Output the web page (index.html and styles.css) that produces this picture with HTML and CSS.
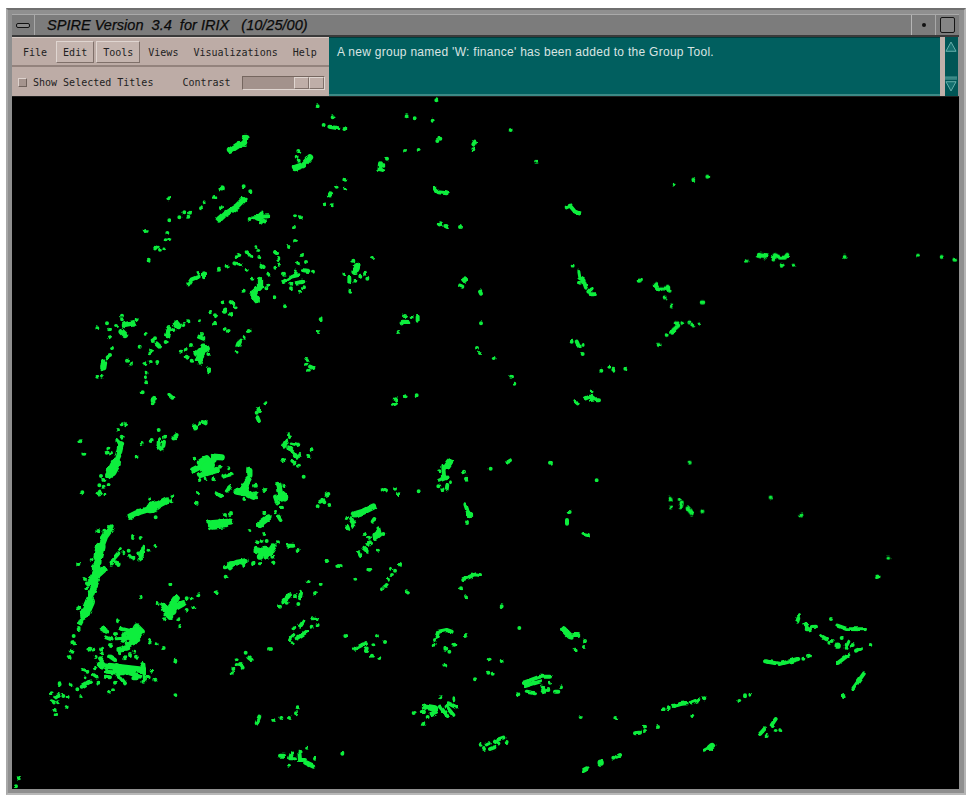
FILE: index.html
```html
<!DOCTYPE html>
<html lang="en">
<head>
<meta charset="utf-8">
<title>SPIRE Version 3.4 for IRIX</title>
<link rel="stylesheet" href="styles.css">
</head>
<body>
<div class="window">
  <div class="titlebar">
    <div class="tb-menu"><span class="tb-menu-bar"></span></div>
    <div class="tb-title">SPIRE Version  3.4  for IRIX   (10/25/00)</div>
    <div class="tb-min"><span class="tb-min-dot"></span></div>
    <div class="tb-max"><span class="tb-max-box"></span></div>
  </div>
  <div class="panel">
    <div class="controls">
      <div class="menubar">
        <span class="menu-item spaced">File</span>
        <span class="menu-item raised spaced">Edit</span>
        <span class="menu-item raised">Tools</span>
        <span class="menu-item">Views</span>
        <span class="menu-item">Visualizations</span>
        <span class="menu-item">Help</span>
      </div>
      <div class="optionbar">
        <span class="checkbox"></span>
        <span class="opt-label">Show Selected Titles</span>
        <span class="contrast-label">Contrast</span>
        <div class="slider"><span class="thumb"></span><span class="thumb"></span></div>
      </div>
    </div>
    <div class="message">A new group named 'W: finance' has been added to the Group Tool.</div>
    <div class="scroll">
      <svg class="scroll-svg" width="13" height="59" viewBox="0 0 13 59">
        <path class="arrow" d="M6.5 3 L12 13 H1 Z"/>
        <path class="arrow-line" d="M0 41 H13 M0 43 H13"/>
        <path class="arrow" d="M1 46 H12 L6.5 56 Z"/>
      </svg>
    </div>
  </div>
  <svg class="canvas" width="947" height="692" viewBox="12 97 947 692" role="img" aria-label="Galaxy of document points">
    <defs>
      <filter id="rough" x="12" y="97" width="947" height="692" filterUnits="userSpaceOnUse" primitiveUnits="userSpaceOnUse">
        <feTurbulence type="fractalNoise" baseFrequency="0.2" numOctaves="1" seed="4" result="n"/>
        <feDisplacementMap in="SourceGraphic" in2="n" scale="4" xChannelSelector="R" yChannelSelector="G"/>
      </filter>
    </defs>
    <g class="points" filter="url(#rough)">
    <g transform="translate(40 100) scale(.33333)">
      <path class="dots" d="M833 19h0M878 52h0M851 75h0M868 80L895 85M775 153h0M770 170h0M776 182h0M890 260h0M854 313h0M875 316h0M611 259h0M631 274h0M523 291h0M385 295h0M491 307h0M483 325h0M543 325h0M433 337h0M450 338h0M445 350h0M418 352h0M388 361h0M629 357h0M640 352L685 349M665 340L655 350M650 355L675 364M660 367h0M765 349h0M780 352h0M762 381h0M765 423h0M747 441h0M317 393h0M382 399h0M388 417h0M377 421h0M350 440L345 445M360 449h0M373 445h0M326 479h0M649 441h0M655 453h0M658 471h0M620 456L626 463M634 467h0M598 465h0M589 472h0M583 490L603 495M705 456L711 460M715 477h0M717 491h0M706 503h0M664 497L671 501M620 509h0M560 497h0M537 509h0M685 524h0M637 536h0M786 465h0M774 491h0M798 486h0M819 515h0M732 521h0M790 511L805 513M765 515L775 525L755 530L730 546M770 548L790 545M754 551h0M753 565h0M792 562h0M780 575h0M474 519h0M492 520L492 532M476 530L455 538L445 553M685 554h0M679 565h0M611 572h0M703 592h0M735 619h0M548 607h0M572 606L580 612M587 622h0M510 637h0M525 646h0M572 642h0M525 670h0M554 687h0M566 693h0M626 693h0M614 713h0M842 658h0M836 696h0M246 647h0M246 661h0M290 658h0M228 678h0M201 670h0M172 685h0M210 688h0M207 712h0M445 664h0M430 675h0M400 690h0M480 664h0M486 702h0M475 710L490 716M317 702h0M345 715h0M338 719h0"/>
      <path class="blob" d="M570 152L600 132M616 114L612 128M765 204L790 195L810 172M870 283h0M545 265h0M610 300L590 320L575 330L555 342L537 358M660 540L660 560L645 575L640 585L650 600M555 632h0M280 670L255 675M245 695L255 705M408 670L415 678M388 685L382 705"/>
    </g>
    <g transform="translate(40 340) scale(.33333)">
      <path class="dots" d="M216 24h0M299 20h0M338 3h0M350 10L360 20M377 6h0M328 40h0M333 30h0M210 45L200 52M172 110h0M186 110h0M261 62h0M273 71h0M316 72h0M332 66h0M352 66h0M320 98h0M318 112h0M318 127h0M308 157h0M345 175L338 180M338 190h0M385 163L397 173M453 15h0M422 35h0M437 30h0M440 50h0M455 62h0M470 60h0M480 68h0M505 42h0M507 85L507 97M600 5L595 18M590 35h0M800 60h0M798 74h0M810 80L820 84M807 92h0M676 190h0M655 207L660 213M650 218h0M652 232L657 243M478 250h0M490 246L497 250M245 253h0M258 253h0M234 270h0M356 270h0M375 290h0M335 300h0M305 309h0M400 295L410 285M405 295h0M358 295L355 320L365 328M372 305L370 318M121 304h0M133 341h0M124 457h0M290 350h0M245 290h0M232 303h0M205 323h0M200 338h0M213 342h0M183 408h0M190 420h0M178 436h0M191 440h0M206 435h0M180 455L175 463M196 463h0M330 476h0M397 468h0M394 484h0M347 532h0M463 356h0M540 380h0M565 385h0M550 410L575 403M520 418h0M478 420h0M497 415h0M645 437h0M647 460h0M613 477h0M648 472h0M675 450h0M570 440L560 455M530 460L543 468M474 460h0M470 491h0M705 470L712 490M733 438h0M726 500h0M705 517h0M716 530L722 540M744 283h0M750 292h0M740 305L732 320M755 310L775 315M745 322L770 350M780 345h0M805 348h0M815 331h0M730 360h0M757 365L763 370M777 377h0M791 410h0M865 462L860 464M850 480L840 485M853 487h0M833 499h0M868 495h0M505 548h0M510 565h0M570 522h0M555 525h0M673 520h0M628 573h0M673 582h0M650 607h0M665 603h0M680 603h0M714 607h0M745 617L760 617M773 630h0M700 650h0M700 668h0M640 670h0M660 670h0M860 662h0M895 678h0M560 680L590 665L620 660M555 682h0M580 675L570 685M610 675h0M175 573h0M193 572h0M155 660h0M115 671h0M279 591h0M302 594h0M346 618h0M240 627h0M235 640L222 655L215 670M236 672h0M268 648L280 655M295 640L300 655M310 620L305 645M325 632h0M266 632h0M250 640h0"/>
      <path class="blob" d="M470 40L500 25M480 55L490 20M192 68L190 82M465 262h0M243 310L235 345L220 380L205 405M380 482L340 503L300 515L270 530M460 390L520 360M480 405L530 390M520 350L545 352M483 365L500 355M628 390L628 405M625 420L610 445L590 455L620 460L640 470M715 435L720 460L735 475M510 550L570 545M520 560L555 555M685 533L660 552M650 630L690 640M700 620L680 650M660 650h0M214 563L195 590L180 630L170 680"/>
      <path class="mass" d="M480 38h0M495 385L510 375M330 505L350 495M215 395L228 370M175 650L182 620M675 635h0M725 470h0M612 452h0M545 550h0"/>
    </g>
    <g transform="translate(0 560) scale(.33333)">
      <path class="dots" d="M235 12h0M350 10h0M335 10h0M355 15h0M235 145h0M255 57h0M259 85h0M245 180L240 190M236 207h0M221 228h0M217 250L225 250M215 272h0M209 291h0M690 10L740 5M677 50h0M675 22h0M730 18h0M760 10h0M780 10h0M820 8h0M980 3h0M511 73h0M422 112h0M650 97h0M595 106h0M575 115h0M560 115h0M473 132h0M580 141h0M560 150h0M495 178h0M535 178h0M541 198h0M923 64h0M962 72h0M945 100h0M903 95L900 115M895 132h0M870 105L850 125M840 140h0M860 128h0M885 108h0M940 175h0M950 178h0M953 195h0M935 200h0M910 185L900 200M880 205h0M880 225L870 240M920 215L890 235M878 250h0M810 267h0M354 184h0M305 205L322 215M360 205L420 220M350 235L410 230M370 265L400 250M318 232L335 238M330 255h0M345 222h0M450 240L448 247M470 253h0M491 264h0M268 269h0M280 269h0M303 268h0M305 280h0M287 291h0M330 290L345 300M360 280h0M375 295h0M390 285h0M408 290h0M403 275h0M526 302h0M300 295L320 325M340 325L420 350M430 312L435 360M250 330L262 335M285 325h0M280 345L290 352M315 350L330 352M350 340L375 370M400 355L410 355M455 332h0M446 352h0M466 359h0M430 365h0M257 352h0M245 380L270 365M295 368h0M345 368h0M232 388h0M244 408h0M324 397h0M339 391h0M179 373h0M212 373h0M526 406h0M152 400h0M175 405L168 412M190 408h0M203 411h0M155 424L162 427M174 427h0M200 441h0M164 450h0M167 465h0M737 278h0M745 292L755 300M710 298h0M700 327h0M720 312L728 323M695 341h0M710 315h0M893 445h0M888 460h0M870 474h0M844 474h0M820 480h0M778 470L770 490M921 563h0M840 587L852 587M875 580L870 595L885 595M898 575L900 600L915 600M945 596h0M867 617h0M915 608L940 620M57 655h0M48 679h0M370 225L400 205M365 245L395 225M380 250L415 240M350 315L400 335M320 335L370 340M355 270L385 265"/>
      <path class="blob" d="M295 5L280 50M310 30L265 70M290 60L265 125L250 170M490 135L510 170M530 115L500 160M515 150L550 130M410 200L425 215L400 245M300 315L430 330"/>
      <path class="mass" d="M515 152h0M395 228L410 212M290 25h0M270 125L255 160"/>
    </g>
    <g transform="translate(340 560) scale(.33333)">
      <path class="dots" d="M2 18h0M88 29h0M46 56h0M153 26h0M165 32h0M180 14h0M156 45h0M144 59h0M140 75L136 80M126 88h0M200 94L204 97M370 57L385 52L405 43L420 45M363 85h0M378 109h0M485 139h0M538 204h0M700 225L715 225M695 233h0M735 243h0M732 261h0M707 269h0M16 228h0M111 228h0M135 246h0M78 249h0M45 266L70 253M100 256h0M80 265L78 273M96 287h0M118 294h0M290 230L295 215L320 210L335 215M285 240h0M281 254h0M343 254h0M378 225h0M316 266h0M328 275h0M316 314h0M449 299h0M485 302h0M445 338h0M458 341h0M405 358h0M550 368L600 350L630 350M555 378L600 365M630 368h0M605 380L615 395M625 390h0M560 395L585 400M535 403h0M645 395L655 395M663 382h0M301 412h0M340 418h0M245 456L255 456M221 459h0M275 462L288 456M263 471h0M250 492h0M300 440L320 465M325 430L350 442M320 440L340 465M722 471h0M829 474h0M971 448h0M986 445h0M1000 438L1020 433M885 520L900 518M915 513h0M912 500h0M954 501h0M422 554h0M432 567h0M440 553L446 550M465 545L475 550M475 538L490 533M500 546h0M450 567L463 562M7 581h0M840 585L830 590M820 593h0M730 630L740 625"/>
      <path class="blob" d="M670 208L690 228M255 440L285 445M782 608h0"/>
    </g>
    <g transform="translate(680 560) scale(.33333)">
      <path class="dots" d="M592 50h0M357 165h0M352 185L355 175M376 190L380 200M380 208L390 208M398 201L408 200M453 177h0M472 197L500 207L555 208M423 228L440 238M448 248h0M458 243h0M485 234h0M505 245L500 255M518 255h0M500 264h0M528 272L543 266M571 255h0M475 308L505 285M520 385L552 340M491 408h0M255 304L300 312L355 297M370 296h0M387 287h0M0 432L20 430M35 427L55 420M73 415h0M37 468h0M178 423h0M195 406h0M211 404h0M287 477L275 495M255 505L240 522M260 528h0M287 513h0M301 510h0M72 572L95 560"/>
      <path class="blob" d="M473 257h0M90 563L96 558"/>
    </g>
    <g transform="translate(340 95) scale(.33333)">
      <path class="dots" d="M289 16h0M200 64h0M224 70h0M278 77h0M512 105h0M13 102h0M301 131h0M292 138h0M405 140L400 148M400 163h0M195 168h0M236 165h0M588 200h0M141 191h0M120 205L118 225L130 228M130 210h0M13 254h0M16 281h0M282 280L295 292L320 295M680 337L690 332L705 350L718 355M316 393L322 396M360 396h0M99 489h0M40 497h0M13 539h0M61 542h0M75 536h0M82 551h0M46 557h0M28 548L28 560M31 587h0M698 512h0M715 530L718 548L730 555L738 578M720 563h0M755 580L745 590M752 598L765 598M896 557h0M372 553L378 560M360 572L367 575M420 590L423 596M195 663h0M215 667h0M233 665L233 677M185 685L190 680L205 681M423 685h0M176 711h0"/>
      <path class="blob" d="M300 388h0M52 510L50 520L44 530"/>
    </g>
    <g transform="translate(340 335) scale(.33333)">
      <path class="dots" d="M411 39h0M420 54h0M461 69h0M695 20h0M710 20L716 33M728 30h0M728 57h0M513 125h0M523 146h0M784 107h0M808 95h0M820 104h0M856 101h0M755 169h0M737 190L750 185L765 190M755 195h0M770 196L777 196M706 198L713 205M167 193h0M197 184h0M230 181h0M160 209L168 205M310 395L312 425M298 409h0M320 428L297 437M333 442h0M322 450L320 463M295 454h0M307 463h0M372 410h0M378 431h0M452 401h0M505 380L513 376M630 383h0M770 436h0M128 462L138 466M165 461h0M174 478h0M236 469h0M376 508L385 535M381 564h0M689 531h0M681 555L681 566M730 597L744 600M19 549h0M33 550L40 562M40 573h0M22 575L25 583M103 552L98 560M115 580L120 600L105 612M130 597h0M100 600h0M75 597h0M87 608h0M90 622h0M83 630h0M70 638L80 647M57 652L62 663M114 647h0M180 687h0"/>
      <path class="blob" d="M330 380L320 395M390 540h0M100 515L70 530L45 538M112 598L105 605"/>
    </g>
    <g transform="translate(640 160) scale(.33333)">
      <path class="dots" d="M101 73h0M160 59h0M202 50h0M320 302h0M400 298L405 285L420 293L435 293L442 284M425 315L428 317M460 317h0M614 291h0M834 287h0M905 291h0M943 299h0M47 375L57 390M60 385L85 385M83 380h0M86 392h0M74 412h0M95 439h0M185 427L190 427M0 361h0M110 490L115 497L100 510L96 518M127 489h0M148 487h0M157 496h0M178 490h0M80 525h0M56 555h0"/>
      <path class="blob" d="M360 285L376 288"/>
    </g>
    <g transform="translate(640 400) scale(.33333)">
      <path class="dots" d="M149 188h0M89 293L92 301M119 298h0M125 310L122 322M92 322h0M143 325L155 340M187 334h0M392 292h0M484 346h0M745 473h0M712 530h0"/>
    </g>
    </g>
  </svg>
</div>
</body>
</html>
```
FILE: styles.css
```css
* { box-sizing: border-box; }
html, body { margin: 0; padding: 0; background: #fff; }
body { width: 972px; height: 801px; overflow: hidden; }

.window {
  width: 960px;
  height: 787px;
  margin: 8px 0 0 6px;
  padding: 4px 5px 4px 4px;
  background: #8f8f8f;
  border-top: 2px solid #6f6f6f;
  border-left: 2px solid #a8a8a8;
  border-right: 2px solid #b4b4b4;
  border-bottom: 2px solid #b8b8b8;
  display: flex;
  flex-direction: column;
  filter: blur(0.35px);
}

.titlebar {
  height: 23px;
  display: flex;
  background: #7c7c7c;
  border-top: 1px solid #a9a9a9;
  border-bottom: 2px solid #3a3a3a;
  flex: none;
}
.tb-menu {
  width: 23px;
  display: flex;
  align-items: center;
  justify-content: center;
  border-right: 1px solid #a8a8a8;
}
.tb-menu-bar {
  width: 14px;
  height: 5px;
  background: #8a8a8a;
  border: 1px solid #111;
  border-radius: 2px;
}
.tb-title {
  flex: 1;
  padding-left: 12px;
  font: italic 14.55px/20px "Liberation Sans", sans-serif;
  -webkit-text-stroke: 0.25px #0a0a0a;
  color: #0a0a0a;
  white-space: pre;
  overflow: hidden;
}
.tb-min {
  width: 25px;
  display: flex;
  align-items: center;
  justify-content: center;
  border-left: 1px solid #b5b5b5;
  border-right: 1px solid #a8a8a8;
}
.tb-min-dot {
  width: 4px;
  height: 4px;
  background: #111;
  border-radius: 50%;
}
.tb-max {
  width: 23px;
  display: flex;
  align-items: center;
  justify-content: center;
}
.tb-max-box {
  width: 15px;
  height: 16px;
  border: 1px solid #151515;
  border-radius: 2px;
  background: #858585;
}

.panel {
  height: 60px;
  display: flex;
  flex: none;
  border-bottom: 1px solid #1f1f1f;
}
.controls {
  width: 317px;
  display: flex;
  flex-direction: column;
  background: #bdaca6;
  font: 10px/14px "DejaVu Sans Mono", monospace;
  color: #222;
}
.menubar {
  height: 30px;
  display: flex;
  align-items: center;
  gap: 1px;
  padding-left: 4px;
  border-bottom: 2px solid #93837d;
  border-top: 1px solid #d8ccc6;
}
.menu-item {
  padding: 4px 6px 2px;
  border: 1px solid transparent;
  white-space: pre;
}
.menu-item.spaced { margin-right: 1px; }
.menu-item.raised {
  background: #c5b5af;
  border-color: #e0d6d1 #7f706a #7f706a #e0d6d1;
}
.optionbar {
  flex: 1;
  display: flex;
  align-items: center;
  padding: 2px 0 0 6px;
}
.checkbox {
  width: 9px;
  height: 9px;
  background: #a5948e;
  border: 1px solid;
  border-color: #ddd2cd #6f615b #6f615b #ddd2cd;
}
.opt-label { margin-left: 6px; }
.contrast-label { margin-left: 29px; }
.slider {
  width: 83px;
  height: 14px;
  margin-left: 11px;
  display: flex;
  justify-content: flex-end;
  background: #a3928c;
  border: 1px solid;
  border-color: #75665f #e0d6d1 #e0d6d1 #75665f;
}
.thumb {
  width: 15px;
  background: #bfaea8;
  border: 1px solid;
  border-color: #e0d6d1 #7f706a #7f706a #e0d6d1;
}

.message {
  flex: 1;
  padding: 7px 8px;
  background: #015f5f;
  border-top: 1px solid #013c3c;
  border-bottom: 2px solid #3c8a86;
  font: 12px/14px "Liberation Sans", sans-serif;
  letter-spacing: 0.28px;
  color: #d9e4e2;
  white-space: pre;
}
.scroll {
  width: 19px;
  display: flex;
  justify-content: flex-end;
  background: #005656;
  border-left: 5px solid #c1b0aa;
  padding-right: 1px;
  border-right: 1px solid #8f8f8f;
}
.scroll-svg { display: block; }
.arrow { fill: #136f6e; stroke: #6fb5b1; stroke-width: 1; }
.arrow-line { stroke: #6fb5b1; stroke-width: 1; fill: none; }

.canvas {
  display: block;
  flex: none;
  background: #000;
}
.dots, .blob, .mass {
  fill: none;
  stroke: #0aee3c;
  stroke-linecap: round;
  stroke-linejoin: round;
}
.dots { stroke-width: 12; }
.blob { stroke-width: 19; }
.mass { stroke-width: 30; }
```
